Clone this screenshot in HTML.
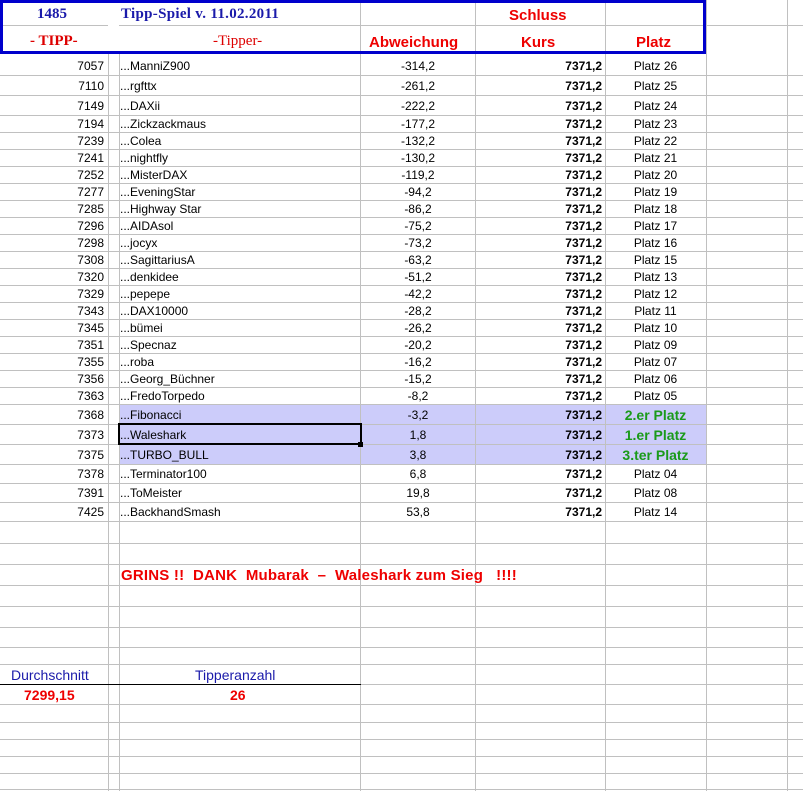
<!DOCTYPE html>
<html style="overflow:hidden;height:791px"><head><meta charset="utf-8"><style>
body{margin:0;width:803px;height:791px;background:#fff;position:relative;overflow:hidden;font-family:"Liberation Sans",Arial,sans-serif;font-size:12px;color:#000}
.h{position:absolute;left:0;width:803px;height:1px;background:#c0c0c0}
.v{position:absolute;top:0;width:1px;height:791px;background:#c0c0c0}
.r{position:absolute;left:0;width:803px}
.r div{position:absolute;top:0;height:100%;display:flex;align-items:center;white-space:nowrap}
.a{left:0;width:104px;justify-content:flex-end}
.b{left:120px}
.c{left:360px;width:116px;justify-content:center}
.d{left:476px;width:126px;justify-content:flex-end;font-weight:bold}
.e{left:605px;width:101px;justify-content:center}
.hl{position:absolute;left:119px;width:587px;background:#ccccfa}
.t{position:absolute;white-space:nowrap}
.g{color:#1a9a1a;font-weight:bold;font-size:14px}
</style></head><body>
<div class="hl" style="top:404px;height:60px"></div>
<div class="h" style="top:25px"></div>
<div class="h" style="top:75px"></div><div class="h" style="top:95px"></div><div class="h" style="top:115px"></div>
<div class="h" style="top:132px"></div><div class="h" style="top:149px"></div><div class="h" style="top:166px"></div><div class="h" style="top:183px"></div><div class="h" style="top:200px"></div><div class="h" style="top:217px"></div><div class="h" style="top:234px"></div><div class="h" style="top:251px"></div><div class="h" style="top:268px"></div><div class="h" style="top:285px"></div><div class="h" style="top:302px"></div><div class="h" style="top:319px"></div><div class="h" style="top:336px"></div><div class="h" style="top:353px"></div><div class="h" style="top:370px"></div><div class="h" style="top:387px"></div><div class="h" style="top:404px"></div>
<div class="h" style="top:424px"></div><div class="h" style="top:444px"></div><div class="h" style="top:464px"></div><div class="h" style="top:483px"></div><div class="h" style="top:502px"></div><div class="h" style="top:521px"></div>
<div class="h" style="top:543px"></div><div class="h" style="top:564px"></div><div class="h" style="top:585px"></div><div class="h" style="top:606px"></div><div class="h" style="top:627px"></div><div class="h" style="top:647px"></div><div class="h" style="top:664px"></div><div class="h" style="top:684px"></div><div class="h" style="top:704px"></div><div class="h" style="top:722px"></div><div class="h" style="top:739px"></div><div class="h" style="top:756px"></div><div class="h" style="top:773px"></div><div class="h" style="top:789px"></div>
<div class="v" style="left:108px"></div><div class="v" style="left:119px;top:53px;height:738px"></div><div class="v" style="left:360px"></div><div class="v" style="left:475px"></div><div class="v" style="left:605px"></div><div class="v" style="left:706px"></div><div class="v" style="left:787px"></div>
<div style="position:absolute;left:0;top:0;width:700px;height:48px;border:3px solid #0000cc;background:transparent"></div>
<div style="position:absolute;left:108px;top:3px;width:11px;height:48px;background:#fff"></div>
<div class="t" style="left:37px;top:6px;font:bold 15px 'Liberation Serif',serif;color:#1a1aaa">1485</div>
<div class="t" style="left:121px;top:6px;font:bold 15px 'Liberation Serif',serif;color:#1a1aaa;letter-spacing:0.3px">Tipp-Spiel v. 11.02.2011</div>
<div class="t" style="left:509px;top:7px;font:bold 15px 'Liberation Sans',sans-serif;color:#e00">Schluss</div>
<div class="t" style="left:30px;top:33px;font:bold 15px 'Liberation Serif',serif;color:#d00">- TIPP-</div>
<div class="t" style="left:213px;top:33px;font:15px 'Liberation Serif',serif;color:#d00">-Tipper-</div>
<div class="t" style="left:369px;top:34px;font:bold 15px 'Liberation Sans',sans-serif;color:#e00">Abweichung</div>
<div class="t" style="left:521px;top:34px;font:bold 15px 'Liberation Sans',sans-serif;color:#e00">Kurs</div>
<div class="t" style="left:636px;top:34px;font:bold 15px 'Liberation Sans',sans-serif;color:#e00">Platz</div>
<div class="r" style="top:56px;height:19px"><div class="a">7057</div><div class="b">...ManniZ900</div><div class="c">-314,2</div><div class="d">7371,2</div><div class="e">Platz 26</div></div>
<div class="r" style="top:76px;height:19px"><div class="a">7110</div><div class="b">...rgfttx</div><div class="c">-261,2</div><div class="d">7371,2</div><div class="e">Platz 25</div></div>
<div class="r" style="top:96px;height:19px"><div class="a">7149</div><div class="b">...DAXii</div><div class="c">-222,2</div><div class="d">7371,2</div><div class="e">Platz 24</div></div>
<div class="r" style="top:116px;height:16px"><div class="a">7194</div><div class="b">...Zickzackmaus</div><div class="c">-177,2</div><div class="d">7371,2</div><div class="e">Platz 23</div></div>
<div class="r" style="top:133px;height:16px"><div class="a">7239</div><div class="b">...Colea</div><div class="c">-132,2</div><div class="d">7371,2</div><div class="e">Platz 22</div></div>
<div class="r" style="top:150px;height:16px"><div class="a">7241</div><div class="b">...nightfly</div><div class="c">-130,2</div><div class="d">7371,2</div><div class="e">Platz 21</div></div>
<div class="r" style="top:167px;height:16px"><div class="a">7252</div><div class="b">...MisterDAX</div><div class="c">-119,2</div><div class="d">7371,2</div><div class="e">Platz 20</div></div>
<div class="r" style="top:184px;height:16px"><div class="a">7277</div><div class="b">...EveningStar</div><div class="c">-94,2</div><div class="d">7371,2</div><div class="e">Platz 19</div></div>
<div class="r" style="top:201px;height:16px"><div class="a">7285</div><div class="b">...Highway Star</div><div class="c">-86,2</div><div class="d">7371,2</div><div class="e">Platz 18</div></div>
<div class="r" style="top:218px;height:16px"><div class="a">7296</div><div class="b">...AIDAsol</div><div class="c">-75,2</div><div class="d">7371,2</div><div class="e">Platz 17</div></div>
<div class="r" style="top:235px;height:16px"><div class="a">7298</div><div class="b">...jocyx</div><div class="c">-73,2</div><div class="d">7371,2</div><div class="e">Platz 16</div></div>
<div class="r" style="top:252px;height:16px"><div class="a">7308</div><div class="b">...SagittariusA</div><div class="c">-63,2</div><div class="d">7371,2</div><div class="e">Platz 15</div></div>
<div class="r" style="top:269px;height:16px"><div class="a">7320</div><div class="b">...denkidee</div><div class="c">-51,2</div><div class="d">7371,2</div><div class="e">Platz 13</div></div>
<div class="r" style="top:286px;height:16px"><div class="a">7329</div><div class="b">...pepepe</div><div class="c">-42,2</div><div class="d">7371,2</div><div class="e">Platz 12</div></div>
<div class="r" style="top:303px;height:16px"><div class="a">7343</div><div class="b">...DAX10000</div><div class="c">-28,2</div><div class="d">7371,2</div><div class="e">Platz 11</div></div>
<div class="r" style="top:320px;height:16px"><div class="a">7345</div><div class="b">...bümei</div><div class="c">-26,2</div><div class="d">7371,2</div><div class="e">Platz 10</div></div>
<div class="r" style="top:337px;height:16px"><div class="a">7351</div><div class="b">...Specnaz</div><div class="c">-20,2</div><div class="d">7371,2</div><div class="e">Platz 09</div></div>
<div class="r" style="top:354px;height:16px"><div class="a">7355</div><div class="b">...roba</div><div class="c">-16,2</div><div class="d">7371,2</div><div class="e">Platz 07</div></div>
<div class="r" style="top:371px;height:16px"><div class="a">7356</div><div class="b">...Georg_Büchner</div><div class="c">-15,2</div><div class="d">7371,2</div><div class="e">Platz 06</div></div>
<div class="r" style="top:388px;height:16px"><div class="a">7363</div><div class="b">...FredoTorpedo</div><div class="c">-8,2</div><div class="d">7371,2</div><div class="e">Platz 05</div></div>
<div class="r" style="top:405px;height:19px"><div class="a">7368</div><div class="b">...Fibonacci</div><div class="c">-3,2</div><div class="d">7371,2</div><div class="e g">2.er Platz</div></div>
<div class="r" style="top:425px;height:19px"><div class="a">7373</div><div class="b">...Waleshark</div><div class="c">1,8</div><div class="d">7371,2</div><div class="e g">1.er Platz</div></div>
<div class="r" style="top:445px;height:19px"><div class="a">7375</div><div class="b">...TURBO_BULL</div><div class="c">3,8</div><div class="d">7371,2</div><div class="e g">3.ter Platz</div></div>
<div class="r" style="top:465px;height:18px"><div class="a">7378</div><div class="b">...Terminator100</div><div class="c">6,8</div><div class="d">7371,2</div><div class="e">Platz 04</div></div>
<div class="r" style="top:484px;height:18px"><div class="a">7391</div><div class="b">...ToMeister</div><div class="c">19,8</div><div class="d">7371,2</div><div class="e">Platz 08</div></div>
<div class="r" style="top:503px;height:18px"><div class="a">7425</div><div class="b">...BackhandSmash</div><div class="c">53,8</div><div class="d">7371,2</div><div class="e">Platz 14</div></div>
<div style="position:absolute;left:118px;top:423px;width:240px;height:18px;border:2px solid #000"></div>
<div style="position:absolute;left:358px;top:442px;width:5px;height:5px;background:#000"></div>
<div class="t" style="left:121px;top:567px;font:bold 15px 'Liberation Sans',sans-serif;color:#e00;letter-spacing:0.2px">GRINS !!&nbsp; DANK&nbsp; Mubarak&nbsp; –&nbsp; Waleshark zum Sieg&nbsp;&nbsp; !!!!</div>
<div style="position:absolute;left:0;top:684px;width:361px;height:1px;background:#000"></div>
<div class="t" style="left:11px;top:667px;font-size:14px;color:#1a1aaa">Durchschnitt</div>
<div class="t" style="left:195px;top:667px;font-size:14px;color:#1a1aaa">Tipperanzahl</div>
<div class="t" style="left:24px;top:687px;font:bold 14px 'Liberation Sans',sans-serif;color:#e00">7299,15</div>
<div class="t" style="left:230px;top:687px;font:bold 14px 'Liberation Sans',sans-serif;color:#e00">26</div>
</body></html>
